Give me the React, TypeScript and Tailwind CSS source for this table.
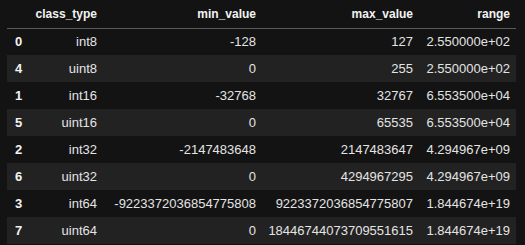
import React from "react";

const rows = [
  ["0", "int8", "-128", "127", "2.550000e+02"],
  ["4", "uint8", "0", "255", "2.550000e+02"],
  ["1", "int16", "-32768", "32767", "6.553500e+04"],
  ["5", "uint16", "0", "65535", "6.553500e+04"],
  ["2", "int32", "-2147483648", "2147483647", "4.294967e+09"],
  ["6", "uint32", "0", "4294967295", "4.294967e+09"],
  ["3", "int64", "-9223372036854775808", "9223372036854775807", "1.844674e+19"],
  ["7", "uint64", "0", "18446744073709551615", "1.844674e+19"],
];

const headers = ["class_type", "min_value", "max_value", "range"];

export default function App() {
  return (
    <main
      className="w-[525px] h-[245px] overflow-hidden bg-[#131313] pl-[7px]"
      style={{ fontFamily: '"Liberation Sans", Arial, sans-serif' }}
    >
      <table className="table-fixed border-collapse w-[509px]">
        <colgroup>
          <col className="w-[22px]" />
          <col className="w-[74px]" />
          <col className="w-[159px]" />
          <col className="w-[157px]" />
          <col className="w-[97px]" />
        </colgroup>
        <thead>
          <tr className="h-[28px] border-b border-[#5a5a5a]">
            <th></th>
            {headers.map((h) => (
              <th
                key={h}
                className="text-right pr-[6px] text-[12px] font-bold text-[#f2f2f2] whitespace-nowrap"
              >
                {h}
              </th>
            ))}
          </tr>
        </thead>
        <tbody>
          {rows.map((row, i) => (
            <tr
              key={row[0]}
              className={
                "h-[27px] text-[13px] text-[#e4e4e4] " +
                (i % 2 === 1 ? "bg-[#222222]" : "bg-[#131313]")
              }
            >
              <td className="pl-[8px] font-bold text-[#f2f2f2]">{row[0]}</td>
              {row.slice(1).map((cell, j) => (
                <td key={j} className="text-right pr-[6px] whitespace-nowrap">
                  {cell}
                </td>
              ))}
            </tr>
          ))}
        </tbody>
      </table>
    </main>
  );
}
